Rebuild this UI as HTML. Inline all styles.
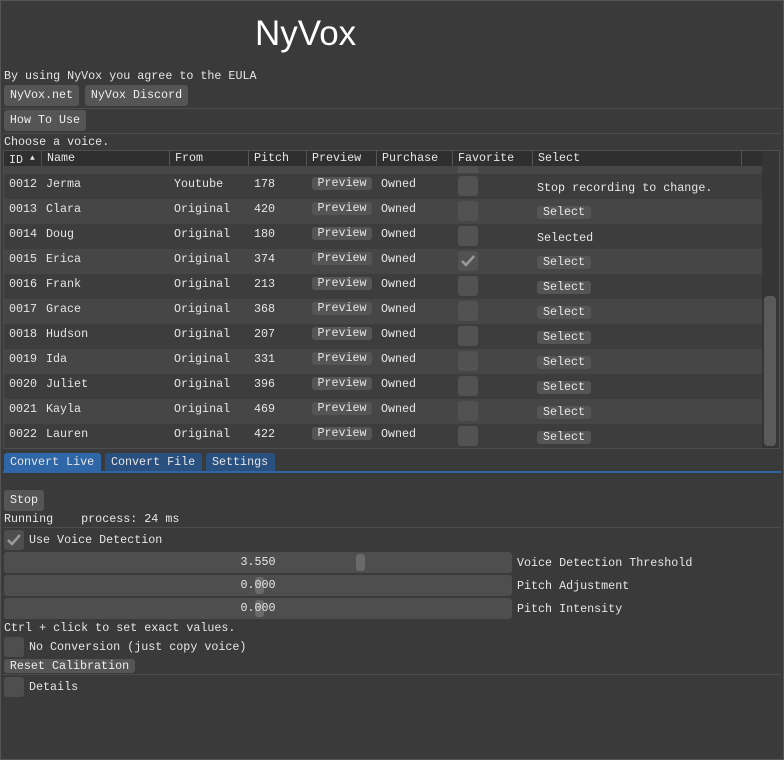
<!DOCTYPE html>
<html><head><meta charset="utf-8"><style>
*{margin:0;padding:0;box-sizing:border-box}
body{width:784px;height:760px;background:#3a3a3a;font-family:"Liberation Mono",monospace;font-size:11.7px;color:#e6e6e6;position:relative;overflow:hidden}
.a{position:absolute;white-space:pre}
.btn{position:absolute;background:#555;border-radius:3px;text-align:center;color:#eee}
.sep{position:absolute;left:3px;width:778px;height:1px;background:#4c4c4c}
.cb{position:absolute;width:20px;height:20px;background:#4e4e4e;border-radius:3px}
.row{position:absolute;left:4px;width:758px;height:25px}
.row span{position:absolute;top:3px}
.pv{position:absolute;left:308px;top:3px;width:60px;height:13px;background:#555;border-radius:3px;text-align:center;line-height:13px}
.fav{position:absolute;left:454px;top:2px;width:20px;height:20px;background:#525252;border-radius:3px}
.sel{position:absolute;left:533px;top:7px;width:54px;height:13px;background:#555;border-radius:3px;text-align:center;line-height:13px}
.hd{position:absolute;top:151px;height:15px;line-height:15px;padding-left:5px;border-left:1px solid #555}
.sl{position:absolute;left:4px;width:508px;height:21px;background:#4e4e4e;border-radius:3px}
.sl i{position:absolute;top:2px;width:9px;height:17px;background:#6a6a6a;border-radius:3px}
.sl b{position:absolute;left:0;width:508px;text-align:center;top:3px;font-weight:normal}
</style></head><body>
<div class="a" style="left:0;top:0;width:784px;height:760px;border:1px solid #555"></div>
<div class="a" style="left:255px;top:14px;font-family:'Liberation Sans',sans-serif;font-size:35px;color:#fff">NyVox</div>
<div class="a" style="left:4px;top:69px">By using NyVox you agree to the EULA</div>
<div class="btn" style="left:4px;top:85px;width:75px;height:21px;line-height:21px">NyVox.net</div>
<div class="btn" style="left:85px;top:85px;width:103px;height:21px;line-height:21px">NyVox Discord</div>
<div class="sep" style="top:108px"></div>
<div class="btn" style="left:4px;top:110px;width:82px;height:21px;line-height:21px">How To Use</div>
<div class="sep" style="top:133px"></div>
<div class="a" style="left:4px;top:135px">Choose a voice.</div>
<div class="a" style="left:3px;top:150px;width:777px;height:299px;border:1px solid #4e4e4e"></div>
<div class="a" style="left:4px;top:151px;width:758px;height:15px;background:#2f2f2f"></div>
<div class="hd" style="left:4px;border:none">ID <span style="font-size:8px;vertical-align:3px">▲</span></div>
<div class="hd" style="left:41px">Name</div>
<div class="hd" style="left:169px">From</div>
<div class="hd" style="left:248px">Pitch</div>
<div class="hd" style="left:306px">Preview</div>
<div class="hd" style="left:376px">Purchase</div>
<div class="hd" style="left:452px">Favorite</div>
<div class="hd" style="left:532px">Select</div>
<div class="hd" style="left:741px;width:21px"></div>
<div class="a" style="left:4px;top:166px;width:758px;height:8px;background:#464646"></div>
<div class="a" style="left:458px;top:166px;width:20px;height:7px;background:#525252"></div>
<div class="a" style="left:762px;top:151px;width:17px;height:297px;background:#353535"></div>
<div class="a" style="left:764px;top:296px;width:12px;height:150px;background:#5a5a5a;border-radius:4px"></div>

<div class="row" style="top:174px;background:#3d3d3d"><span style="left:5px">0012</span><span style="left:42px">Jerma</span><span style="left:170px">Youtube</span><span style="left:250px">178</span><div class="pv">Preview</div><span style="left:377px">Owned</span><div class="fav"></div><span style="left:533px;top:7px">Stop recording to change.</span></div>
<div class="row" style="top:199px;background:#464646"><span style="left:5px">0013</span><span style="left:42px">Clara</span><span style="left:170px">Original</span><span style="left:250px">420</span><div class="pv">Preview</div><span style="left:377px">Owned</span><div class="fav"></div><div class="sel">Select</div></div>
<div class="row" style="top:224px;background:#3d3d3d"><span style="left:5px">0014</span><span style="left:42px">Doug</span><span style="left:170px">Original</span><span style="left:250px">180</span><div class="pv">Preview</div><span style="left:377px">Owned</span><div class="fav"></div><span style="left:533px;top:7px">Selected</span></div>
<div class="row" style="top:249px;background:#464646"><span style="left:5px">0015</span><span style="left:42px">Erica</span><span style="left:170px">Original</span><span style="left:250px">374</span><div class="pv">Preview</div><span style="left:377px">Owned</span><div class="fav"><svg width="20" height="20"><path d="M4 10 L8 14 L16 5" stroke="#9a9a9a" stroke-width="2.5" fill="none"/></svg></div><div class="sel">Select</div></div>
<div class="row" style="top:274px;background:#3d3d3d"><span style="left:5px">0016</span><span style="left:42px">Frank</span><span style="left:170px">Original</span><span style="left:250px">213</span><div class="pv">Preview</div><span style="left:377px">Owned</span><div class="fav"></div><div class="sel">Select</div></div>
<div class="row" style="top:299px;background:#464646"><span style="left:5px">0017</span><span style="left:42px">Grace</span><span style="left:170px">Original</span><span style="left:250px">368</span><div class="pv">Preview</div><span style="left:377px">Owned</span><div class="fav"></div><div class="sel">Select</div></div>
<div class="row" style="top:324px;background:#3d3d3d"><span style="left:5px">0018</span><span style="left:42px">Hudson</span><span style="left:170px">Original</span><span style="left:250px">207</span><div class="pv">Preview</div><span style="left:377px">Owned</span><div class="fav"></div><div class="sel">Select</div></div>
<div class="row" style="top:349px;background:#464646"><span style="left:5px">0019</span><span style="left:42px">Ida</span><span style="left:170px">Original</span><span style="left:250px">331</span><div class="pv">Preview</div><span style="left:377px">Owned</span><div class="fav"></div><div class="sel">Select</div></div>
<div class="row" style="top:374px;background:#3d3d3d"><span style="left:5px">0020</span><span style="left:42px">Juliet</span><span style="left:170px">Original</span><span style="left:250px">396</span><div class="pv">Preview</div><span style="left:377px">Owned</span><div class="fav"></div><div class="sel">Select</div></div>
<div class="row" style="top:399px;background:#464646"><span style="left:5px">0021</span><span style="left:42px">Kayla</span><span style="left:170px">Original</span><span style="left:250px">469</span><div class="pv">Preview</div><span style="left:377px">Owned</span><div class="fav"></div><div class="sel">Select</div></div>
<div class="row" style="top:424px;height:24px;background:#3d3d3d"><span style="left:5px">0022</span><span style="left:42px">Lauren</span><span style="left:170px">Original</span><span style="left:250px">422</span><div class="pv">Preview</div><span style="left:377px">Owned</span><div class="fav"></div><div class="sel">Select</div></div>

<div class="a" style="left:4px;top:453px;width:97px;height:19px;background:#2f66a8;border-radius:3px 3px 0 0;line-height:19px;padding-left:6px">Convert Live</div>
<div class="a" style="left:105px;top:453px;width:97px;height:19px;background:#2a5080;border-radius:3px 3px 0 0;line-height:19px;padding-left:6px">Convert File</div>
<div class="a" style="left:206px;top:453px;width:69px;height:19px;background:#2a5080;border-radius:3px 3px 0 0;line-height:19px;padding-left:6px">Settings</div>
<div class="a" style="left:3px;top:471px;width:778px;height:2px;background:#2f66a8"></div>
<div class="btn" style="left:4px;top:490px;width:40px;height:21px;line-height:21px">Stop</div>
<div class="a" style="left:4px;top:512px">Running    process: 24 ms</div>
<div class="sep" style="top:527px"></div>
<div class="cb" style="left:4px;top:530px"><svg width="20" height="20"><path d="M4 10 L8 14 L16 5" stroke="#9a9a9a" stroke-width="2.5" fill="none"/></svg></div>
<div class="a" style="left:29px;top:533px">Use Voice Detection</div>
<div class="sl" style="top:552px"><b>3.550</b><i style="left:352px"></i></div>
<div class="a" style="left:517px;top:556px">Voice Detection Threshold</div>
<div class="sl" style="top:575px"><i style="left:251px"></i><b>0.000</b></div>
<div class="a" style="left:517px;top:579px">Pitch Adjustment</div>
<div class="sl" style="top:598px"><i style="left:251px"></i><b>0.000</b></div>
<div class="a" style="left:517px;top:602px">Pitch Intensity</div>
<div class="a" style="left:4px;top:621px">Ctrl + click to set exact values.</div>
<div class="cb" style="left:4px;top:637px"></div>
<div class="a" style="left:29px;top:640px">No Conversion (just copy voice)</div>
<div class="btn" style="left:4px;top:659px;width:131px;height:14px;line-height:14px">Reset Calibration</div>
<div class="sep" style="top:674px"></div>
<div class="cb" style="left:4px;top:677px"></div>
<div class="a" style="left:29px;top:680px">Details</div>
</body></html>
